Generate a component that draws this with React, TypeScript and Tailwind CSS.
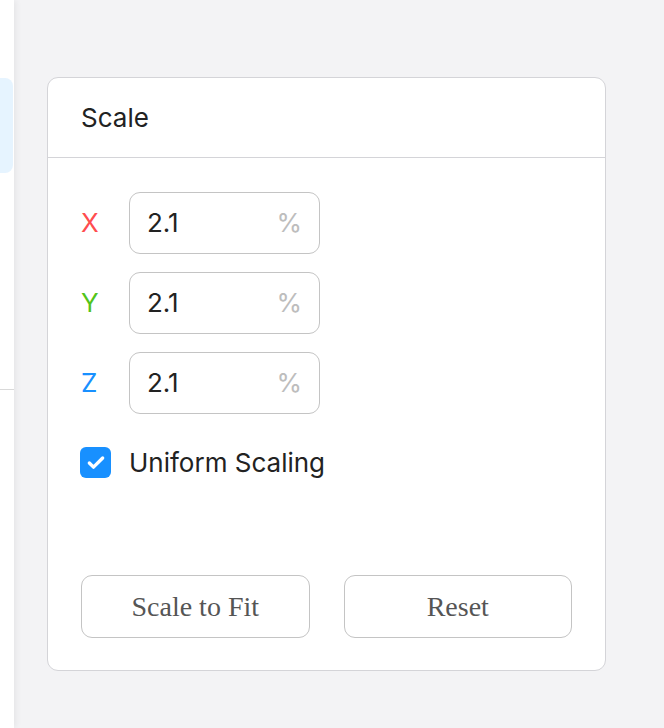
import { Check } from 'lucide-react'

const axes = [
  { label: 'X', color: 'text-[#ff4d4f]' },
  { label: 'Y', color: 'text-[#52c41a]' },
  { label: 'Z', color: 'text-[#1890ff]' },
]

export default function App() {
  return (
    <div className="flex h-[728px] w-[664px] overflow-hidden font-['Inter','Liberation_Sans',Arial,sans-serif]">
      <aside className="relative z-10 w-[14px] shrink-0 bg-white shadow-[2px_0_6px_rgba(0,0,0,0.06)]">
        <div className="mt-[78px] h-[95px] w-[13px] rounded-r-lg bg-[#e6f4ff]" />
        <div className="mt-[216px] h-px w-full bg-[#d9d9d9]" />
      </aside>

      <main className="flex-1 bg-[#f3f3f5] pl-[33px] pt-[77px]">
        <section className="flex h-[594px] w-[559px] flex-col rounded-[11px] border border-[#d4d4d8] bg-white">
          <header className="flex h-[80px] items-center border-b border-[#d4d4d8] px-[33px] text-[26px] text-[#222]">
            Scale
          </header>

          <div className="flex flex-1 flex-col px-[33px] pb-[32px] pt-[34px]">
            <div className="flex flex-col gap-[18px]">
              {axes.map((axis) => (
                <div key={axis.label} className="flex items-center">
                  <span className={`w-[48px] text-[26px] leading-[30px] ${axis.color}`}>{axis.label}</span>
                  <div className="flex h-[62px] w-[191px] items-center justify-between rounded-[11px] border-[1.5px] border-[#c4c4c4] pb-px pl-[17px] pr-[17px]">
                    <span className="text-[26px] leading-[30px] text-[#222]">2.1</span>
                    <span className="text-[26px] leading-[30px] text-[#bdbdbd]">%</span>
                  </div>
                </div>
              ))}
            </div>

            <label className="mt-[33px] flex h-[31px] items-center">
              <span className="-ml-px flex h-[31px] w-[31px] items-center justify-center rounded-[6px] bg-[#1890ff]">
                <Check className="h-[20px] w-[20px] text-white" strokeWidth={4} />
              </span>
              <span className="ml-[18px] text-[26px] leading-[31px] text-[#222]">Uniform Scaling</span>
            </label>

            <div className="mt-auto flex gap-[34px]">
              <button className="h-[63px] w-[229px] rounded-[11px] border-[1.5px] border-[#c4c4c4] bg-white font-['Liberation_Serif',serif] text-[28px] text-[#555]">
                Scale to Fit
              </button>
              <button className="h-[63px] w-[229px] rounded-[11px] border-[1.5px] border-[#c4c4c4] bg-white font-['Liberation_Serif',serif] text-[28px] text-[#555]">
                Reset
              </button>
            </div>
          </div>
        </section>
      </main>
    </div>
  )
}
